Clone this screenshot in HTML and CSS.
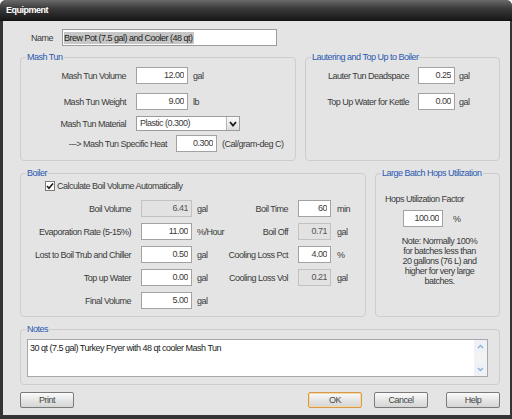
FILE: index.html
```html
<!DOCTYPE html>
<html>

<head>
    <title>Equipment</title>
    <meta charset="utf-8">
    <link rel="stylesheet" href="styles.css">
</head>

<body>
    <div class="window">
        <div class="titlebar">Equipment</div>
        <div class="client">
            <div class="name-row">
                <span class="name-label">Name</span>
                <div class="name-field"><span class="selected">Brew Pot (7.5 gal) and Cooler (48 qt)</span></div>
            </div>

            <div class="group-row top-row">
                <div class="group mash">
                    <div class="legend">Mash Tun</div>
                    <div class="row first">
                        <span class="lbl mash-lbl">Mash Tun Volume</span>
                        <input class="num mash-num" value="12.00" readonly>
                        <span class="unit">gal</span>
                    </div>
                    <div class="row second">
                        <span class="lbl mash-lbl">Mash Tun Weight</span>
                        <input class="num mash-num" value="9.00" readonly>
                        <span class="unit">lb</span>
                    </div>
                    <div class="row select-row">
                        <span class="lbl mash-lbl">Mash Tun Material</span>
                        <div class="select">
                            <span class="select-text">Plastic (0.300)</span>
                            <span class="select-btn">
                                <svg width="8" height="6" viewBox="0 0 8 6"><polyline points="1,1 4,4.5 7,1" fill="none" stroke="#1a1a1a" stroke-width="1.8"/></svg>
                            </span>
                        </div>
                    </div>
                    <div class="row heat-row">
                        <span class="lbl heat-lbl">---&gt; Mash Tun Specific Heat</span>
                        <input class="num heat-num" value="0.300" readonly>
                        <span class="unit">(Cal/gram-deg C)</span>
                    </div>
                </div>

                <div class="group lauter">
                    <div class="legend">Lautering and Top Up to Boiler</div>
                    <div class="row first">
                        <span class="lbl lauter-lbl">Lauter Tun Deadspace</span>
                        <input class="num lauter-num" value="0.25" readonly>
                        <span class="unit lauter-unit">gal</span>
                    </div>
                    <div class="row second">
                        <span class="lbl lauter-lbl">Top Up Water for Kettle</span>
                        <input class="num lauter-num" value="0.00" readonly>
                        <span class="unit lauter-unit">gal</span>
                    </div>
                </div>
            </div>

            <div class="group-row mid-row">
                <div class="group boiler">
                    <div class="legend">Boiler</div>
                    <div class="check-row">
                        <span class="checkbox">
                            <svg width="8" height="8" viewBox="0 0 8 8"><polyline points="1,4 3,6.2 7,1.5" fill="none" stroke="#1a1a1a" stroke-width="1.6"/></svg>
                        </span>
                        <span>Calculate Boil Volume Automatically</span>
                    </div>
                    <div class="row boil-row">
                        <span class="lbl b-lbl">Boil Volume</span>
                        <input class="num b-num off" value="6.41" readonly>
                        <span class="unit b-unit">gal</span>
                        <span class="lbl b-lbl2">Boil Time</span>
                        <input class="num b-num2" value="60" readonly>
                        <span class="unit b-unit2">min</span>
                    </div>
                    <div class="row boil-row">
                        <span class="lbl b-lbl">Evaporation Rate (5-15%)</span>
                        <input class="num b-num" value="11.00" readonly>
                        <span class="unit b-unit">%/Hour</span>
                        <span class="lbl b-lbl2">Boil Off</span>
                        <input class="num b-num2 off" value="0.71" readonly>
                        <span class="unit b-unit2">gal</span>
                    </div>
                    <div class="row boil-row">
                        <span class="lbl b-lbl">Lost to Boil Trub and Chiller</span>
                        <input class="num b-num" value="0.50" readonly>
                        <span class="unit b-unit">gal</span>
                        <span class="lbl b-lbl2">Cooling Loss Pct</span>
                        <input class="num b-num2" value="4.00" readonly>
                        <span class="unit b-unit2">%</span>
                    </div>
                    <div class="row boil-row">
                        <span class="lbl b-lbl">Top up Water</span>
                        <input class="num b-num" value="0.00" readonly>
                        <span class="unit b-unit">gal</span>
                        <span class="lbl b-lbl2">Cooling Loss Vol</span>
                        <input class="num b-num2 off" value="0.21" readonly>
                        <span class="unit b-unit2">gal</span>
                    </div>
                    <div class="row boil-row">
                        <span class="lbl b-lbl">Final Volume</span>
                        <input class="num b-num" value="5.00" readonly>
                        <span class="unit b-unit">gal</span>
                    </div>
                </div>

                <div class="group hops">
                    <div class="legend">Large Batch Hops Utilization</div>
                    <div class="hops-title">Hops Utilization Factor</div>
                    <div class="row hops-row">
                        <input class="num hops-num" value="100.00" readonly>
                        <span class="unit hops-unit">%</span>
                    </div>
                    <div class="hops-note">Note: Normally 100%<br>for batches less than<br>20 gallons (76 L) and<br>higher for very large<br>batches.</div>
                </div>
            </div>

            <div class="group notes">
                <div class="legend">Notes</div>
                <div class="notes-box">
                    <div class="notes-text">30 qt (7.5 gal) Turkey Fryer with 48 qt cooler Mash Tun</div>
                    <div class="scrollbar">
                        <span class="scroll-btn">
                            <svg width="7" height="5" viewBox="0 0 7 5"><polyline points="1,4 3.5,1.5 6,4" fill="none" stroke="#8fb0d8" stroke-width="1.4"/></svg>
                        </span>
                        <span class="scroll-btn">
                            <svg width="7" height="5" viewBox="0 0 7 5"><polyline points="1,1 3.5,3.5 6,1" fill="none" stroke="#8fb0d8" stroke-width="1.4"/></svg>
                        </span>
                    </div>
                </div>
            </div>

            <div class="buttons">
                <button class="btn">Print</button>
                <button class="btn ok">OK</button>
                <button class="btn cancel">Cancel</button>
                <button class="btn help">Help</button>
            </div>
        </div>
    </div>
</body>

</html>
```

FILE: styles.css
```css
body,
html {
    margin: 0;
    padding: 0;
    background-color: #ffffff;
}

body {
    font-family: "Liberation Sans", Arial, sans-serif;
    font-size: 9px;
    letter-spacing: -0.5px;
    color: #3a3a3a;
}

.window {
    width: 512px;
    height: 419px;
    display: flex;
    flex-direction: column;
    background-color: #353535;
    border-radius: 6px 6px 0 0;
}

.titlebar {
    height: 21px;
    line-height: 20px;
    padding-left: 6px;
    color: #ffffff;
    font-weight: bold;
    border-radius: 6px 6px 0 0;
    background: linear-gradient(#6a6a6a, #3a3a3a 40%, #1c1c1c 90%, #101010);
}

.client {
    flex: 1;
    margin: 0 2px 4px 3px;
    padding: 8px 10px 0 17px;
    background-color: #e4e4e4;
}

/* name */
.name-row {
    display: flex;
    align-items: center;
    height: 17px;
}

.name-label {
    width: 33px;
    text-align: right;
    margin-right: 9px;
}

.name-field {
    box-sizing: border-box;
    width: 215px;
    height: 17px;
    padding: 2px 0 0 1px;
    border: 1px solid #9c9c9c;
    background-color: #ffffff;
}

.selected {
    display: inline-block;
    line-height: 12px;
    padding-right: 1px;
    background-color: #c6c6c6;
    color: #222222;
}

/* group boxes */
.group-row {
    display: flex;
}

.top-row {
    margin-top: 11px;
}

.mid-row {
    margin-top: 12px;
}

.group {
    box-sizing: border-box;
    border: 1px solid #cdcdcd;
    border-radius: 4px;
}

.legend {
    width: fit-content;
    margin: -7px 0 0 5px;
    padding: 0 1px;
    line-height: 12px;
    white-space: nowrap;
    color: #2a58b0;
    background-color: #e4e4e4;
}

.mash {
    width: 276px;
    height: 104px;
}

.lauter {
    flex: 1;
    margin-left: 9px;
    height: 104px;
}

.boiler {
    width: 346px;
    height: 144px;
}

.hops {
    flex: 1;
    margin-left: 9px;
    height: 144px;
}

.notes {
    margin-top: 12px;
    height: 56px;
}

/* rows */
.row {
    display: flex;
    align-items: center;
    height: 17px;
    white-space: nowrap;
}

.row.first {
    margin-top: 4px;
}

.row.second {
    margin-top: 9px;
}

.row.select-row {
    height: 15px;
    margin-top: 6px;
}

.row.heat-row {
    margin-top: 4px;
}

.lbl {
    text-align: right;
    flex-shrink: 0;
}

.unit {
    margin-left: 5px;
}

.num {
    box-sizing: border-box;
    height: 17px;
    margin: 0;
    padding: 0 3px 2px 0;
    border: 1px solid #a2a2a2;
    background-color: #ffffff;
    font: inherit;
    letter-spacing: inherit;
    color: #3a3a3a;
    text-align: right;
    outline: none;
}

.num.off {
    background-color: #e2e2e2;
    border-color: #c2c2c2;
    color: #555555;
}

.mash-lbl {
    width: 105px;
    margin-right: 10px;
}

.mash-num {
    width: 52px;
}

.heat-lbl {
    width: 146px;
    margin-right: 9px;
}

.heat-num {
    width: 41px;
}

.select {
    box-sizing: border-box;
    display: flex;
    width: 104px;
    height: 15px;
    border: 1px solid #9c9c9c;
    background-color: #ffffff;
}

.select-text {
    flex: 1;
    padding-left: 3px;
    line-height: 13px;
}

.select-btn {
    box-sizing: border-box;
    width: 13px;
    display: flex;
    align-items: center;
    justify-content: center;
    border-left: 1px solid #b4b4b4;
    background: linear-gradient(#fafafa, #dcdcdc);
}

.lauter-lbl {
    width: 103px;
    margin-right: 9px;
}

.lauter-num {
    width: 37px;
}

.lauter-unit {
    margin-left: 4px;
}

/* boiler */
.check-row {
    display: flex;
    align-items: center;
    height: 12px;
    margin: 1px 0 0 24px;
}

.checkbox {
    box-sizing: border-box;
    width: 10px;
    height: 10px;
    margin-right: 2px;
    display: flex;
    align-items: center;
    justify-content: center;
    border: 1px solid #7a7a7a;
    background-color: #ffffff;
}

.boil-row {
    margin-top: 6px;
}

.check-row + .boil-row {
    margin-top: 8px;
}

.b-lbl {
    width: 110px;
    margin-right: 10px;
}

.b-num {
    width: 51px;
}

.b-unit {
    width: 30px;
}

.b-lbl2 {
    width: 61px;
    margin-right: 10px;
}

.b-num2 {
    width: 33px;
}

.b-unit2 {
    margin-left: 6px;
}

/* hops */
.hops-title {
    margin: 14px 0 0 9px;
    line-height: 12px;
}

.hops-row {
    margin: 5px 0 0 27px;
}

.hops-num {
    width: 40px;
}

.hops-unit {
    margin-left: 10px;
}

.hops-note {
    margin: 9px 0 0 4px;
    line-height: 10px;
    text-align: center;
}

/* notes */
.notes-box {
    box-sizing: border-box;
    display: flex;
    width: 461px;
    height: 38px;
    margin: 4px 0 0 6px;
    border: 1px solid #a8a8a8;
    background-color: #ffffff;
}

.notes-text {
    flex: 1;
    padding: 2px 0 0 2px;
    line-height: 12px;
    color: #222222;
}

.scrollbar {
    width: 13px;
    display: flex;
    flex-direction: column;
    justify-content: space-between;
    background-color: #f3f3f3;
}

.scroll-btn {
    height: 13px;
    display: flex;
    align-items: center;
    justify-content: center;
    background-color: #eef2f7;
}

/* buttons */
.buttons {
    display: flex;
    margin-top: 7px;
}

.btn {
    box-sizing: border-box;
    width: 54px;
    height: 16px;
    margin: 0;
    padding: 0;
    border: 1px solid #7a7a7a;
    border-radius: 2px;
    background: linear-gradient(#fbfbfb, #e6e6e6 50%, #d4d4d4);
    font: inherit;
    letter-spacing: inherit;
    color: #444444;
}

.btn.ok {
    margin-left: auto;
    border-color: #d79a4a;
    box-shadow: inset 0 0 0 1px #f6d7a8;
}

.btn.cancel {
    margin-left: 12px;
}

.btn.help {
    margin-left: 18px;
}
```
